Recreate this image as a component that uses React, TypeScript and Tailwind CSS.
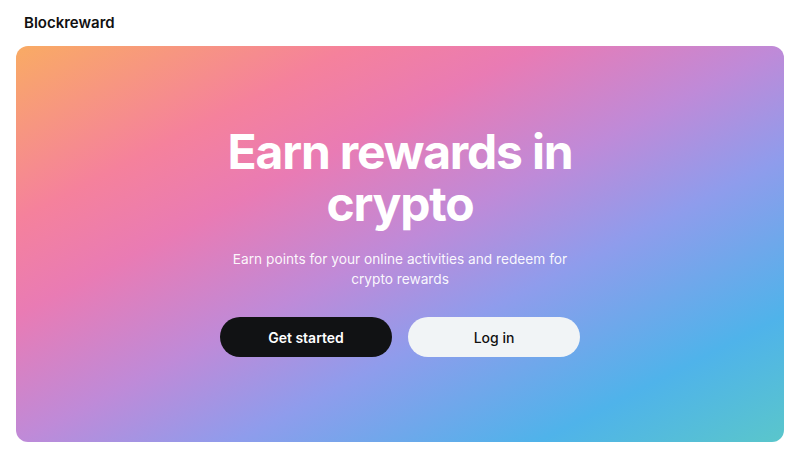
export default function App() {
  return (
    <div className="h-[453px] w-[800px] bg-white px-4 font-['Inter',sans-serif]">
      <header className="flex h-[46px] items-center px-2">
        <div className="text-[15px] font-semibold text-[#111]">Blockreward</div>
      </header>

      {/* hero card */}
      <div className="flex h-[396px] flex-col items-center rounded-xl bg-[linear-gradient(to_bottom_right,#f9ab64_0%,#f5819c_22%,#e97bb4_34%,#bf8ad8_50%,#8f9cec_64%,#4fb3ea_84%,#5ac6cb_100%)] pt-[80px] text-center">
        <h1 className="max-w-[420px] text-[48px] leading-[52px] font-bold tracking-tight text-white">
          Earn rewards in crypto
        </h1>
        <p className="mt-[19px] max-w-[350px] text-[13.7px] leading-[20px] text-white/95">
          Earn points for your online activities and redeem for crypto rewards
        </p>
        <div className="mt-[28px] flex gap-4">
          <button className="h-10 w-[172px] rounded-full bg-[#111214] text-[14px] font-semibold text-white">
            Get started
          </button>
          <button className="h-10 w-[172px] rounded-full bg-[#f1f4f6] text-[14px] font-medium text-[#111]">
            Log in
          </button>
        </div>
      </div>
    </div>
  )
}
